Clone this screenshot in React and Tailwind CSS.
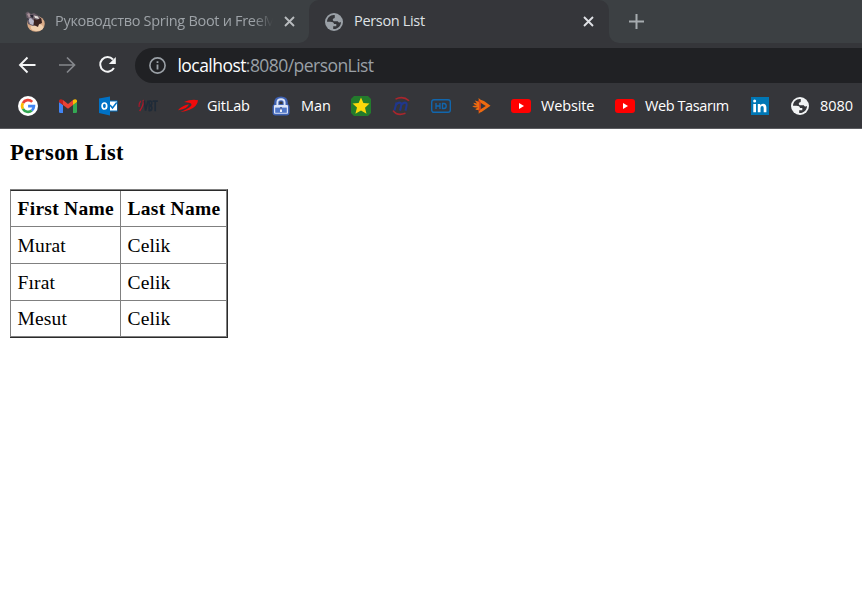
import React from 'react';

const ui = "font-['Open_Sans','Noto_Sans',sans-serif]";

function Globe({ className }) {
  return (
    <svg viewBox="0 0 18 18" className={className}>
      <circle cx="9" cy="9" r="9" fill="currentColor" />
      <path
        d="M8.7 2 C5 2 2 5.2 2 8.7 H5.4 C7.7 8.7 8.8 9.4 9 11 H11.3 V13.2 H8.2 V16 C12.5 16.4 16 13 16 9 C15 9.7 13.3 9.6 12.8 8.2 H9.6 C8.4 8.2 7.7 7.4 7.8 6.4 C7.9 5.2 9.2 5.3 9.6 4.9 C10.1 4.4 9.5 3.3 10 2.3 Z"
        fill="#35363a"
      />
    </svg>
  );
}

function Close({ className }) {
  return (
    <svg viewBox="0 0 11 11" className={className}>
      <path d="M1 1 L10 10 M10 1 L1 10" stroke="currentColor" strokeWidth="1.9" />
    </svg>
  );
}

function HedgehogIcon() {
  return (
    <svg viewBox="0 0 22 22" className="h-[22px] w-[22px] shrink-0">
      <ellipse cx="12" cy="12.8" rx="8.8" ry="7.9" fill="#d9aa86" />
      <ellipse cx="13" cy="16.4" rx="6.2" ry="3.6" fill="#f0cfad" />
      <path d="M1.5 2 L4 .5 L7 3 L10 2 L15 5 L17.5 8 L17.5 12 L14 14 L9 15 L4 13 L3 8 Z" fill="#675b66" />
      <path d="M10 8 L13 9 L17 7 L18 12 L15 13 L14 16 L10 14 Z" fill="#3c231f" />
      <path d="M4 8 L7 7 L10 10 L9 14 L6 13 Z" fill="#b9b6c6" />
      <path d="M3 3 L5 2 L7 5 L5 7 Z" fill="#a9929a" />
      <path d="M6 4 L9 4 L9 7 L7 6 Z M3 7 L5 8 L4 10 Z" fill="#262432" />
      <path d="M10 4.5 L14 5.5 L15 8 L11 7 Z" fill="#e3ded9" />
    </svg>
  );
}

function GoogleIcon() {
  return (
    <svg viewBox="0 0 20 20" className="h-5 w-5">
      <circle cx="10" cy="10" r="10" fill="#fff" />
      <g fill="none" strokeWidth="2.7">
        <path d="M14.2 5.9 A5.9 5.9 0 0 0 4.9 7.1" stroke="#ea4335" />
        <path d="M4.9 7.1 A5.9 5.9 0 0 0 4.9 12.9" stroke="#fbbc05" />
        <path d="M4.9 12.9 A5.9 5.9 0 0 0 13.8 14.5" stroke="#34a853" />
        <path d="M13.8 14.5 A5.9 5.9 0 0 0 15.9 10.2 H10.1" stroke="#4285f4" />
      </g>
    </svg>
  );
}

function GmailIcon() {
  return (
    <svg viewBox="0 0 18 14" className="h-[14px] w-[18px]">
      <path d="M0 3 L4 6 V14 H1.3 Q0 14 0 12.7Z" fill="#4285f4" />
      <path d="M18 3 L14 6 V14 H16.7 Q18 14 18 12.7Z" fill="#34a853" />
      <path d="M4 1.1 L9 4.9 L14 1.1 V6 L9 9.8 L4 6Z" fill="#ea4335" />
      <path d="M0 2 C0 .2 2 -.5 4 1.1 V6 L0 3Z" fill="#c5221f" />
      <path d="M18 2 C18 .2 16 -.5 14 1.1 V6 L18 3Z" fill="#fbbc04" />
    </svg>
  );
}

function OutlookIcon() {
  return (
    <svg viewBox="0 0 20 20" className="h-5 w-5">
      <path d="M10 4.5 H19.5 V15.5 H10Z" fill="#0072c6" />
      <path d="M11 5.5 H19 V14.5 H11Z" fill="#fff" />
      <path d="M12 9 L14.5 12 L18.7 6.5" fill="none" stroke="#0072c6" strokeWidth="1.5" />
      <path d="M1 2.5 L12 .5 V19.5 L1 17Z" fill="#0072c6" />
      <ellipse cx="6.4" cy="10" rx="2.3" ry="3" fill="none" stroke="#fff" strokeWidth="1.7" />
    </svg>
  );
}

function VbtIcon() {
  return (
    <svg viewBox="0 0 20 20" className="h-5 w-5">
      <path d="M2.8 5 Q.6 7.5 1.2 11" fill="none" stroke="#a6192c" strokeWidth="1.2" />
      <path d="M5.2 3.8 Q6 9 1.6 15" fill="none" stroke="#b3182a" strokeWidth="1.3" />
      <path
        d="M6.3 4.6 L7.6 14.6 L10 4.6 M11.2 4.5 V15.2 M11.2 5.1 H12.6 Q14 5.4 13.8 7.4 Q13.6 9.5 11.5 9.6 Q14 9.8 13.8 12.4 Q13.6 14.8 11.2 14.6 M14.6 5.2 H19.8 M17.2 5 V15.2"
        fill="none"
        stroke="#1f2b38"
        strokeWidth="1.7"
      />
    </svg>
  );
}

function SwooshIcon() {
  return (
    <svg viewBox="0 0 20 20" className="h-5 w-5">
      <path d="M6 6 Q13 3 20 4.2 Q19.6 10.3 11.5 13.8 Q6.8 15.9 2.4 15.9 Q11.5 12.6 13.4 9.2 Q14.6 6.6 6 6Z" fill="#f00b0b" />
      <path d="M0 14.2 Q3.2 10 10.8 8.2 Q10.2 12.6 0 14.2Z" fill="#f00b0b" />
    </svg>
  );
}

function LockIcon() {
  return (
    <svg viewBox="0 0 18 20" className="h-5 w-[18px]">
      <path d="M4.8 10 V6.5 Q4.8 3 9 3 Q13.2 3 13.2 6.5 V10" fill="none" stroke="#3f62b3" strokeWidth="5.2" />
      <rect x=".5" y="8" width="17" height="11.5" rx="3" fill="#3f62b3" />
      <rect x="2" y="9" width="14" height="8.8" rx="1" fill="#dce5f8" />
      <rect x="3.2" y="11.6" width="11.6" height="5.2" fill="#4f76c8" />
      <path d="M5.4 9 V6.5 Q5.4 3.2 9 3.2 Q12.6 3.2 12.6 6.5 V9" fill="none" stroke="#dce5f8" strokeWidth="1.9" />
      <path d="M9 11.6 V16" stroke="#fff" strokeWidth="1.8" />
      <path d="M9 11 V13.6" stroke="#27468f" strokeWidth="1.5" />
    </svg>
  );
}

function StarIcon() {
  return (
    <svg viewBox="0 0 20 20" className="h-5 w-5">
      <path d="M3 0 H17 L20 3 V17 L17 20 H3 L0 17 V3Z" fill="#237b2c" />
      <path d="M10 1.4 L12.4 7 L18.5 7.6 L14 11.7 L15.5 17.7 L10 14.5 L4.4 17.7 L6 11.6 L1.5 7.6 L7.6 7Z" fill="#fbd80b" />
    </svg>
  );
}

function MIcon() {
  return (
    <svg viewBox="0 0 20 20" className="h-5 w-5">
      <path d="M4.5 3.2 Q12 -.6 18 4.8 M2 14.5 Q6 20.4 14.5 17.3" fill="none" stroke="#a9262d" strokeWidth="1.5" />
      <path
        d="M5.6 6.4 L3.4 14.6 M5 8.8 Q8 5.6 10 7.3 Q10.8 8.3 9 14.6 M10.4 8.8 Q13.4 5.6 15.4 7.3 Q16.2 8.5 14.4 14.6"
        fill="none"
        stroke="#20378c"
        strokeWidth="2.1"
      />
    </svg>
  );
}

function HdIcon() {
  return (
    <svg viewBox="0 0 20 14" className="h-[14px] w-5">
      <rect x=".7" y=".7" width="18.6" height="12.6" rx="2.2" fill="none" stroke="#1166ad" strokeWidth="1.4" />
      <path d="M5 4 V10 M9 4 V10 M5 7 H9 M11.5 4 V10 M11 4.5 H13 Q15.2 4.8 15.2 7 Q15.2 9.5 13 9.5 H11" fill="none" stroke="#1166ad" strokeWidth="1.35" />
    </svg>
  );
}

function FlameIcon() {
  return (
    <svg viewBox="0 0 20 20" className="h-5 w-5">
      <path d="M7.5 2 Q9 3.8 13 5 L19.5 9.8 L10.5 16 Q8 16.7 7.8 18 L7.6 13.8 Q5 14.5 4.3 13 L7 11.5 Q3 12 1.2 10 L6 9.5 Q2.7 8.8 2.5 6.8 L6 7.5 L3.8 4.5 L8 5.8Z" fill="#ee6a10" />
      <path d="M9.6 6.8 L14.8 9.9 L9.6 13.2Z" fill="#37343a" />
      <path d="M7.4 4.6 L9 6.4 V13.2 L8 15" fill="none" stroke="#d3331a" strokeWidth="1.3" />
    </svg>
  );
}

function YoutubeIcon() {
  return (
    <svg viewBox="0 0 20 14" className="h-[14px] w-5">
      <rect width="20" height="14" rx="3" fill="#f00" />
      <path d="M8 4 L13 7 L8 10Z" fill="#fff" />
    </svg>
  );
}

function LinkedinIcon() {
  return (
    <svg viewBox="0 0 18 18" className="h-[18px] w-[18px]">
      <rect width="18" height="18" fill="#0077b5" />
      <path d="M2.3 7 H5 V15.3 H2.3Z M6.8 7 H9.3 V8.2 Q10.2 6.7 12 6.7 Q15.4 6.7 15.4 10.5 V15.3 H12.7 V11 Q12.7 9 11.2 9 Q9.5 9 9.5 11 V15.3 H6.8Z" fill="#fff" />
      <circle cx="3.65" cy="4" r="1.5" fill="#fff" />
    </svg>
  );
}

const bookmarks = [
  { icon: <GoogleIcon />, slot: 'w-10' },
  { icon: <GmailIcon />, slot: 'w-10' },
  { icon: <OutlookIcon />, slot: 'w-10' },
  { icon: <VbtIcon />, slot: 'w-10' },
  { icon: <SwooshIcon />, label: 'GitLab', slot: 'w-[93px]', track: 'ml-[9px] tracking-[-0.2px]' },
  { icon: <LockIcon />, label: 'Man', slot: 'w-20', track: 'ml-[10px] tracking-[-0.1px]' },
  { icon: <StarIcon />, slot: 'w-10' },
  { icon: <MIcon />, slot: 'w-10' },
  { icon: <HdIcon />, slot: 'w-10' },
  { icon: <FlameIcon />, slot: 'w-10' },
  { icon: <YoutubeIcon />, label: 'Website', slot: 'w-[104px]', track: 'ml-[10px] tracking-[-0.15px]' },
  { icon: <YoutubeIcon />, label: 'Web Tasarım', slot: 'w-[135px]', track: 'ml-[10px] tracking-[-0.41px]' },
  { icon: <LinkedinIcon />, slot: 'w-10' },
  { icon: <Globe className="h-[18px] w-[18px] text-[#f1f3f4]" />, label: '8080', slot: 'w-[70px]', track: 'ml-[10px] tracking-[-0.05px]' },
];

function TabStrip() {
  return (
    <div className="flex h-[43px] bg-[#35363a]">
      <div className="flex w-[309px] items-center rounded-br-[10px] bg-[#3c4043] pl-6">
        <HedgehogIcon />
        <div className="ml-[9px] w-[218px] overflow-hidden whitespace-nowrap pb-[2px] text-[14.5px] tracking-[-0.3px] text-[#9ea3a8] [mask-image:linear-gradient(to_right,black_91%,transparent)]">
          Руководство Spring Boot и FreeM
        </div>
        <Close className="ml-[11px] h-[11px] w-[11px] text-[#b8bbbe]" />
      </div>
      <div className="w-[300px] bg-[#3c4043]">
        <div className="flex h-full items-center rounded-t-[10px] bg-[#35363a] pl-4">
          <Globe className="h-[18px] w-[18px] text-[#9aa0a6]" />
          <span className="ml-[11px] flex-1 pb-[2px] text-[14.5px] tracking-[-0.33px] text-[#dfe1e5]">Person List</span>
          <Close className="mr-[15px] h-[11px] w-[11px] text-[#dfe1e5]" />
        </div>
      </div>
      <div className="flex flex-1 items-center rounded-bl-[10px] bg-[#3c4043] pl-5">
        <svg viewBox="0 0 15 15" className="h-[15px] w-[15px]">
          <path d="M7.5 0 V15 M0 7.5 H15" stroke="#a6abaf" strokeWidth="2" />
        </svg>
      </div>
    </div>
  );
}

function Toolbar() {
  return (
    <div className="flex h-[45px] items-center bg-[#35363a] pl-[18px]">
      <svg viewBox="0 0 18 18" className="mb-px h-[18px] w-[18px]">
        <path d="M17.5 9 H2 M9.5 1.5 L2 9 L9.5 16.5" fill="none" stroke="#f4f5f6" strokeWidth="1.9" />
      </svg>
      <svg viewBox="0 0 18 18" className="mb-px ml-[22px] h-[18px] w-[18px]">
        <path d="M1 9 H16.5 M9 1.5 L16.5 9 L9 16.5" fill="none" stroke="#85888c" strokeWidth="1.7" />
      </svg>
      <svg viewBox="0 0 18 18" className="mb-px ml-[22px] h-[18px] w-[18px]">
        <path d="M15 3.5 A7.3 7.3 0 1 0 15.9 12" fill="none" stroke="#f4f5f6" strokeWidth="2" />
        <path d="M17.8 1 V8 H10.8Z" fill="#f4f5f6" />
      </svg>
      <div className="ml-[19px] flex h-[35px] flex-1 items-center rounded-l-full bg-[#202124] pl-[14px]">
        <svg viewBox="0 0 17 17" className="h-[17px] w-[17px]">
          <circle cx="8.5" cy="8.5" r="7.6" fill="none" stroke="#9aa0a6" strokeWidth="1.6" />
          <path d="M8.5 4.3 V6 M8.5 7.5 V12.5" stroke="#9aa0a6" strokeWidth="1.8" />
        </svg>
        <span className="ml-[11.5px] text-[17.5px] tracking-[-0.55px] text-[#9aa0a6]">
          <span className="text-white">localhost</span>:8080/personList
        </span>
      </div>
    </div>
  );
}

function BookmarksBar() {
  return (
    <div className="flex h-[41px] items-center overflow-hidden border-b border-[#5b5c60] bg-[#35363a] pb-[4px] pl-[18px]">
      {bookmarks.map((b, i) => (
        <div key={i} className={`flex shrink-0 items-center ${b.slot}`}>
          <span className="flex w-5 shrink-0 justify-center">{b.icon}</span>
          {b.label && <span className={`whitespace-nowrap text-[14.5px] text-white ${b.track}`}>{b.label}</span>}
        </div>
      ))}
    </div>
  );
}

const people = [
  ['Murat', 'Celik'],
  ['Fırat', 'Celik'],
  ['Mesut', 'Celik'],
];

export default function App() {
  return (
    <div className={`h-[597px] w-[862px] overflow-hidden bg-white ${ui}`}>
      <TabStrip />
      <Toolbar />
      <BookmarksBar />
      <main className="pl-[10px] pt-[10px] font-['Liberation_Serif','Times_New_Roman',serif] text-black">
        <h3 className="h-[50px] text-[22.5px] font-bold leading-[27px] tracking-[0.42px]">Person List</h3>
        <div className="w-[218px] border-t border-r border-b border-t-[#808080] border-r-[#2b2b2b] border-b-[#2b2b2b]">
          <table className="w-[217px] table-fixed border-separate border-spacing-0 border-t border-r border-b border-l border-t-[#2b2b2b] border-r-[#808080] border-b-[#808080] border-l-[#808080] text-[19.5px] leading-[23px] tracking-[0.15px]">
            <thead>
              <tr className="h-[36px]">
                <th className="w-[110px] border-r border-b border-[#808080] py-0 pl-[6.5px] text-left whitespace-nowrap tracking-[0.28px]">First Name</th>
                <th className="border-b border-[#808080] py-0 pl-[6.5px] text-left whitespace-nowrap tracking-[0.28px]">Last Name</th>
              </tr>
            </thead>
            <tbody>
              {people.map(([first, last], i) => (
                <tr key={first} className={i === 2 ? 'h-[35px]' : 'h-[37px]'}>
                  <td className={`border-r border-[#808080] py-0 pl-[6.5px] ${i === 2 ? '' : 'border-b'}`}>{first}</td>
                  <td className={`border-[#808080] py-0 pl-[6.5px] ${i === 2 ? '' : 'border-b'}`}>{last}</td>
                </tr>
              ))}
            </tbody>
          </table>
        </div>
      </main>
    </div>
  );
}
